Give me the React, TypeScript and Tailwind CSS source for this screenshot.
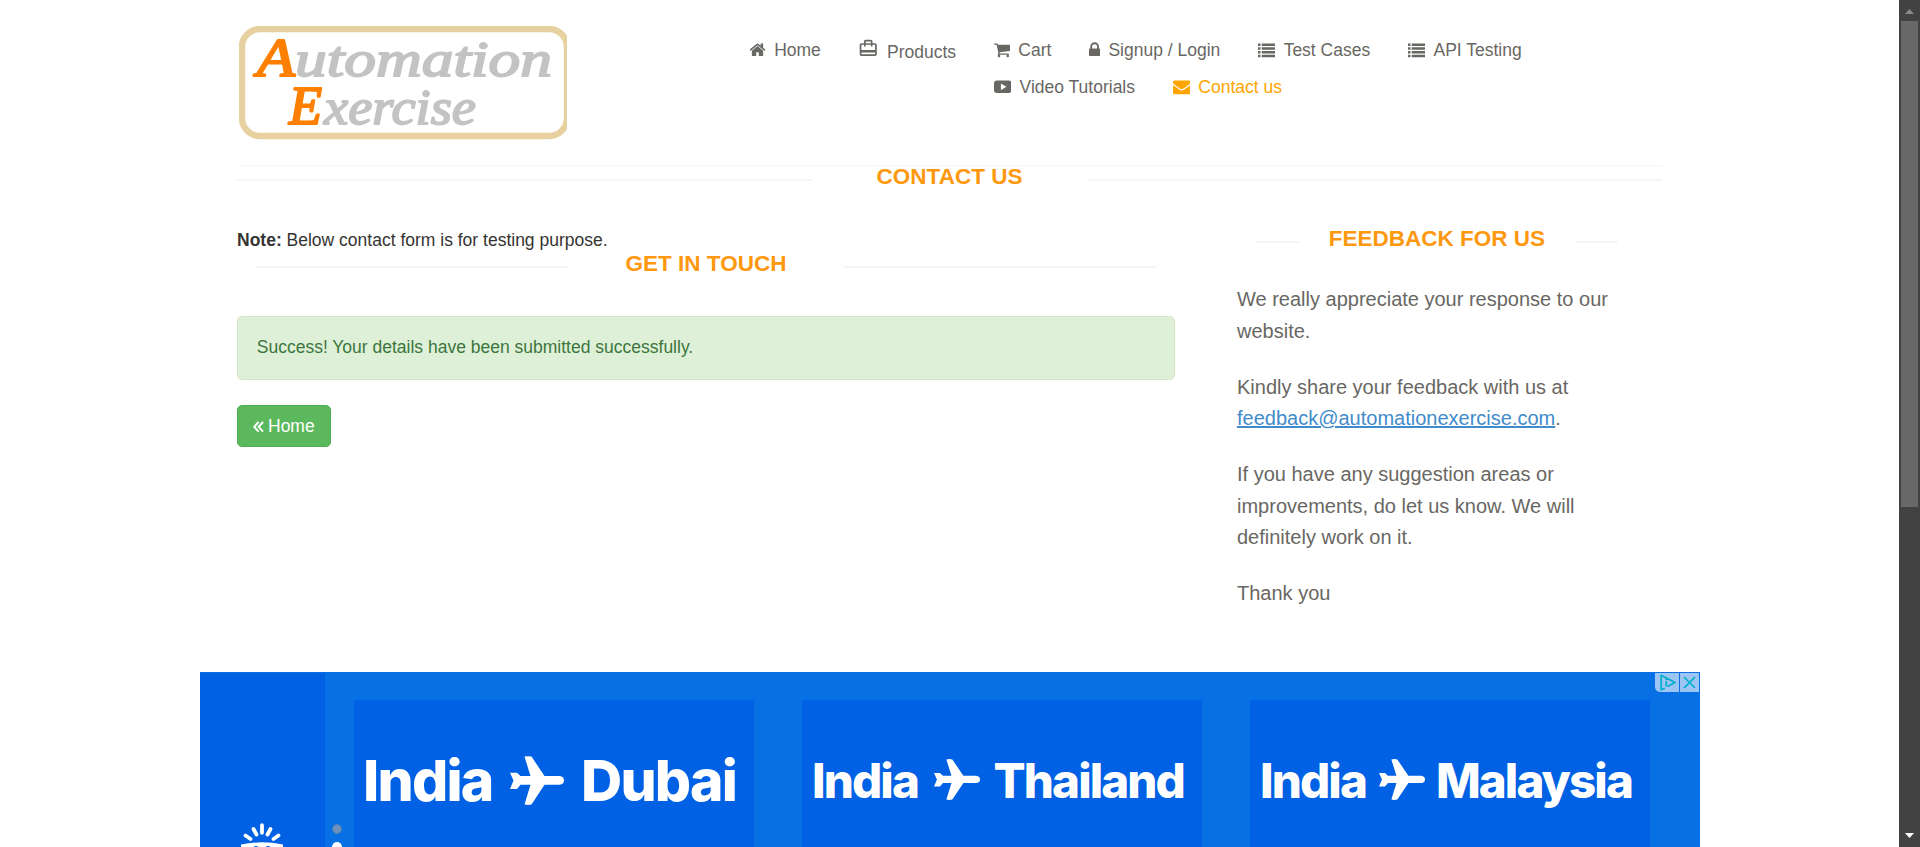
import React from "react";
import { MdCardTravel } from "react-icons/md";

const PATHS = {
  home: "M1408 992v480q0 26-19 45t-45 19h-384v-384h-256v384h-384q-26 0-45-19t-19-45v-480q0-1 .5-3t.5-3l575-474 575 474q1 2 1 6zm223-69l-62 74q-8 9-21 11h-3q-13 0-21-7l-692-577-692 577q-12 8-24 7-13-2-21-11l-62-74q-8-10-7-23.5t11-21.5l719-599q32-26 76-26t76 26l244 204v-195q0-14 9-23t23-9h192q14 0 23 9t9 23v408l219 182q10 8 11 21.5t-7 23.5z",
  cart: "M704 1536q0 52-38 90t-90 38-90-38-38-90 38-90 90-38 90 38 38 90zm896 0q0 52-38 90t-90 38-90-38-38-90 38-90 90-38 90 38 38 90zm128-1088v512q0 24-16.5 42.5t-40.5 21.5l-1044 122q13 60 13 70 0 16-24 64h920q26 0 45 19t19 45-19 45-45 19h-1024q-26 0-45-19t-19-45q0-11 8-31.5t16-36 21.5-40 15.5-29.5l-177-823h-204q-26 0-45-19t-19-45 19-45 45-19h256q16 0 28.5 6.5t19.5 15.5 13 24.5 8 26 5.5 29.5 4.5 26h1201q26 0 45 19t19 45z",
  lock: "M640 768h512v-192q0-106-75-181t-181-75-181 75-75 181v192zm832 96v576q0 40-28 68t-68 28h-960q-40 0-68-28t-28-68v-576q0-40 28-68t68-28h32v-192q0-184 132-316t316-132 316 132 132 316v192h32q40 0 68 28t28 68z",
  list: "M0 256h256v256H0zM384 256h1408v256H384zM0 640h256v256H0zM384 640h1408v256H384zM0 1024h256v256H0zM384 1024h1408v256H384zM0 1408h256v256H0zM384 1408h1408v256H384z",
  video: "M300 256H1492Q1792 256 1792 556V1236Q1792 1536 1492 1536H300Q0 1536 0 1236V556Q0 256 300 256zM711 560V1232L1280 896z",
  mail: "M1792 710v794q0 66-47 113t-113 47h-1472q-66 0-113-47t-47-113v-794q44 49 101 87 362 246 497 345 57 42 92.5 65.5t94.5 48 110 24.5h2q51 0 110-24.5t94.5-48 92.5-65.5q170-123 498-345 57-39 100-87zm0-294q0 79-49 151t-122 123q-376 261-468 325-10 7-42.5 31t-54 38.5-52 32.5-57.5 27-50 9h-2q-23 0-50-9t-57.5-27-52-32.5-54-38.5-42.5-31q-91-64-262-182.5t-205-142.5q-62-42-117-115.5t-55-136.5q0-78 41.5-130t118.5-52h1472q65 0 112.5 47t47.5 113z",
};

function NavItem({ icon, box, className = "", children }: { icon: keyof typeof PATHS; box: string; className?: string; children: string }) {
  return (
    <li>
      <a className={`flex h-[25px] items-center whitespace-nowrap leading-[25px] ${className}`}>
        <svg viewBox={box} className="mr-[8.3px] h-[17.5px] w-auto" fill="currentColor" fillRule="evenodd">
          <path d={PATHS[icon]} />
        </svg>
        {children}
      </a>
    </li>
  );
}

function Logo() {
  return (
    <svg width="328" height="114" viewBox="0 0 328 114" className="block">
      <rect x="3" y="3" width="325" height="107" rx="18" fill="none" stroke="#e7d1a0" strokeWidth="6.4" />
      <g fontFamily="'Liberation Serif', serif" fontStyle="italic" fill="#c3c3c3" stroke="#c3c3c3" strokeWidth="1.8" strokeLinejoin="round">
        <text x="18" y="50" fontSize="55" fill="#ff8000" stroke="#ff8000" strokeWidth="2.2" textLength="38" lengthAdjust="spacingAndGlyphs">A</text>
        <text x="56" y="50" fontSize="50" textLength="257" lengthAdjust="spacingAndGlyphs">utomation</text>
        <text x="50" y="98" fontSize="54" fill="#ff8000" stroke="#ff8000" strokeWidth="2.2" textLength="33" lengthAdjust="spacingAndGlyphs">E</text>
        <text x="85" y="98" fontSize="50" textLength="152" lengthAdjust="spacingAndGlyphs">xercise</text>
      </g>
    </svg>
  );
}

function Title({ line, children }: { line: string; children: string }) {
  return (
    <h2 className="flex items-start justify-between text-[22.5px] leading-[23px] font-bold whitespace-nowrap text-[#fe980f]">
      <span className={`mt-[14px] h-[2px] bg-[#f5f5f5] ${line}`} />
      {children}
      <span className={`mt-[14px] h-[2px] bg-[#f5f5f5] ${line}`} />
    </h2>
  );
}

function Plane({ className }: { className: string }) {
  return (
    <svg viewBox="0 0 54 50" className={className} fill="#fff" preserveAspectRatio="none">
      <path d="M14.5.6Q18-.3 21.5.6L34.5 20.5H49.5Q54 21 54 25T49.5 29.3H34.5L21.5 49.5Q18 50.3 14.5 49.5L20.5 29.3H10.5L7 33.6H0L3.500 25 0 17H7L10.5 20.5H20.5z" />
    </svg>
  );
}

function Route({ to, big = false }: { to: string; big?: boolean }) {
  return (
    <div
      className={`flex h-[160px] w-[400px] items-start justify-between bg-[#0061e4] pt-[46px] font-[Inter,sans-serif] leading-[70px] font-extrabold whitespace-nowrap text-white ${
        big ? "pr-[18px] pl-[9px] text-[57px] tracking-[-1.8px]" : "pr-[18px] pl-[10px] text-[47.5px] tracking-[-1.9px]"
      }`}
    >
      <span>India</span>
      <Plane className={big ? "mt-[10px] h-[49px] w-[54px]" : "mt-[13px] ml-[3px] h-[41px] w-[46px]"} />
      <span>{to}</span>
    </div>
  );
}

function Advert() {
  return (
    <section className="relative flex h-[175px] w-[1500px] overflow-hidden bg-[#0670e4]">
      <div className="mt-px flex w-[125px] shrink-0 items-end bg-[#0061e4]">
        <svg width="125" height="26" viewBox="0 0 125 26" fill="none" stroke="#fff" strokeWidth="3.8" strokeLinecap="round">
          <path d="M45.500 14.500l5 3.500M53.500 8l3 5.500M62 4.200v7.600M70.500 8l-3 5.500M78.500 14.500l-5 3.500" />
          <path d="M41 26V23.500Q62 19.200 83 23.500V26H70.500Q68 24.200 65.500 26H58.500Q56 24.200 53.500 26z" fill="#fff" stroke="none" />
        </svg>
      </div>
      <div className="flex w-[29px] shrink-0 flex-col items-center pt-[152px] pr-[5px]">
        <span className="size-[10px] shrink-0 rounded-full border border-[#4f81b5] bg-[#6c92bd]" />
        <span className="mt-2 size-[10px] shrink-0 rounded-full bg-white" />
      </div>
      <div className="flex gap-12 pt-7">
        <Route to="Dubai" big />
        <Route to="Thailand" />
        <Route to="Malaysia" />
      </div>
      <div className="absolute top-px right-px flex gap-px text-[#00aecd]">
        <span className="flex h-[19px] w-6 items-center justify-center rounded-bl-[5px] bg-[#9cc5f4]">
          <svg width="16" height="17" viewBox="0 0 16 17" fill="none" stroke="currentColor" strokeWidth="1.7" strokeLinejoin="round" className="ml-0.5">
            <path d="M7.500 12.500L15 8.500 1.200 1.200V15.800L4.800 14.200M6.300 7v5.500M6.300 4.300v1.700" />
          </svg>
        </span>
        <span className="flex size-[19px] items-center justify-center bg-[#9cc5f4]">
          <svg width="13" height="13" viewBox="0 0 13 13" fill="none" stroke="currentColor" strokeWidth="1.7">
            <path d="M1 1l11 11M12 1L1 12" />
          </svg>
        </span>
      </div>
    </section>
  );
}

export default function App() {
  return (
    <div className="flex h-[847px] overflow-hidden bg-white font-['Liberation_Sans',Arial,sans-serif] text-[17.5px] text-[#363432]">
      <div className="flex w-[1899px] flex-col">
        <div className="ml-[237px] w-[1425px]">
          <header className="flex h-[165px] pt-[26px]">
            <div className="w-[512.6px] pl-[2px]">
              <Logo />
            </div>
            <ul className="flex gap-[37.7px] pt-[11.5px] text-[#696763]">
              <NavItem icon="home" box="64 0 1664 1792">Home</NavItem>
              <li>
                <a className="-ml-px flex items-start leading-[28px]">
                  <MdCardTravel className="mr-[9px] size-[20.5px]" />
                  Products
                </a>
              </li>
              <li>
                <ul className="flex gap-[37.5px]">
                  <NavItem icon="cart" box="64 0 1664 1792">Cart</NavItem>
                  <NavItem icon="lock" box="320 0 1152 1792">Signup / Login</NavItem>
                  <NavItem icon="list" box="0 0 1792 1792">Test Cases</NavItem>
                  <NavItem icon="list" box="0 0 1792 1792">API Testing</NavItem>
                </ul>
                <ul className="flex gap-[37.5px] pt-3">
                  <NavItem icon="video" box="0 0 1792 1792">Video Tutorials</NavItem>
                  <NavItem icon="mail" box="0 0 1792 1792" className="text-[orange]">Contact us</NavItem>
                </ul>
              </li>
            </ul>
          </header>
          <div className="h-px bg-[#f5f5f5]" />
          <div className="-mt-px h-[62px]">
            <Title line="w-[575px]">CONTACT US</Title>
          </div>
          <div className="flex h-[445px] justify-between">
            <main className="w-[938px]">
              <p className="h-[25px] leading-[27px]">
                <b>Note:</b> Below contact form is for testing purpose.
              </p>
              <div className="h-[64px] pr-[19px] pl-[19px]">
                <Title line="w-[312.5px]">GET IN TOUCH</Title>
              </div>
              <div className="flex h-[64px] items-center rounded-[5px] border border-[#d6e9c6] bg-[#dff0d8] px-[18.75px] pb-[2px] text-[#3c763d]">
                Success! Your details have been submitted successfully.
              </div>
              <a className="mt-[25px] flex h-[42px] w-[94px] items-center rounded-[5px] border border-[#4cae4c] bg-[#5cb85c] pl-[15px] text-white">
                <svg width="11" height="12" viewBox="0 0 11 12" fill="none" stroke="currentColor" strokeWidth="2" className="mt-px mr-[4px]">
                  <path d="M5.500 1L1.200 5.800l4.300 4.800M10 1L5.700 5.800l4.300 4.800" />
                </svg>
                Home
              </a>
            </main>
            <aside className="w-[425px]">
              <div className="h-[57px] pr-[44px] pl-[19px]">
                <Title line="w-[43px]">FEEDBACK FOR US</Title>
              </div>
              <address className="flex w-[390px] flex-col gap-[24.6px] text-[20px] leading-[31.5px] text-[#696763] not-italic">
                <p>We really appreciate your response to our website.</p>
                <p>
                  Kindly share your feedback with us at <u className="text-[#428bca]">feedback@automationexercise.com</u>.
                </p>
                <p>If you have any suggestion areas or improvements, do let us know. We will definitely work on it.</p>
                <p>Thank you</p>
              </address>
            </aside>
          </div>
        </div>
        <div className="ml-[200px]">
          <Advert />
        </div>
      </div>
      <div className="flex w-[21px] flex-col items-center bg-[#424242] pr-px">
        <svg width="9" height="5" viewBox="0 0 9 5" className="mt-[9px]">
          <path d="M4.500 0L9 5H0z" fill="#8a8a8a" />
        </svg>
        <div className="mt-[7px] h-[486px] w-[17px] bg-[#686868]" />
        <svg width="9" height="5" viewBox="0 0 9 5" className="mt-auto mb-[9px]">
          <path d="M0 0h9L4.500 5z" fill="#fff" />
        </svg>
      </div>
    </div>
  );
}
